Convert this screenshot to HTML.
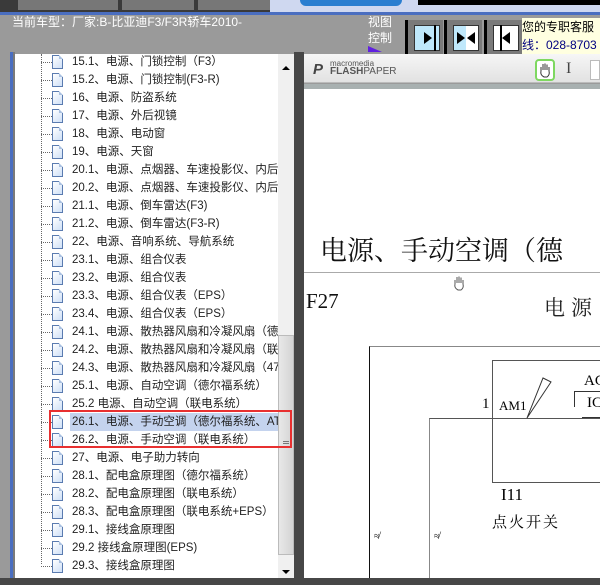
<!DOCTYPE html>
<html><head><meta charset="utf-8"><style>
*{margin:0;padding:0;box-sizing:border-box}
html,body{width:600px;height:585px;overflow:hidden}
body{background:#9a9a9a;position:relative;font-family:"Liberation Sans","Noto Sans CJK SC",sans-serif}
.a{position:absolute}
.row{position:absolute;left:0;height:18px;font-size:11.5px;color:#222;line-height:18px;white-space:nowrap}
.row .ic{position:absolute;left:52px;top:2px;width:11px;height:14px;border:1px solid #5a7bb0;background:linear-gradient(135deg,#fff,#cfe0f7)}
.row .ic:after{content:"";position:absolute;right:-1px;top:-1px;border-style:solid;border-width:0 4px 4px 0;border-color:#fff #fff #a9c0e0 #a9c0e0}
.row .h{position:absolute;left:41px;top:9px;width:11px;border-top:1px dotted #666}
.row .t{position:absolute;left:72px;top:0}
.btn{position:absolute;top:20px;width:38px;height:36px;background:#7a7a7a;border-left:3px solid #000}
.btn i{position:absolute;left:6px;top:5px;width:26px;height:26px;background:#bfe8fb;border:1px solid #333}
</style></head><body>
<div class="a" style="left:0;top:0;width:600px;height:12px;background:#3a3a3a"></div>
<div class="a" style="left:18px;top:0;width:100px;height:10px;background:#777"></div>
<div class="a" style="left:122px;top:0;width:72px;height:10px;background:#777"></div>
<div class="a" style="left:198px;top:0;width:72px;height:10px;background:#777"></div>
<div class="a" style="left:270px;top:0;width:330px;height:12px;background:#cfd8f0"></div>
<div class="a" style="left:300px;top:0;width:102px;height:6px;background:#2a7ed0;border-radius:0 0 6px 6px"></div>
<div class="a" style="left:418px;top:0;width:182px;height:5px;background:#000"></div>
<div class="a" style="left:0;top:12px;width:600px;height:3px;background:#4a6ec0"></div>
<div class="a" style="left:12px;top:14px;color:#fff;font-size:12px;line-height:16px">当前车型：厂家:B-比亚迪F3/F3R轿车2010-</div>
<div class="a" style="left:368px;top:14px;color:#fff;font-size:12px;line-height:16px">视图<br>控制</div>
<div class="a" style="left:368px;top:46px;width:0;height:0;border-left:14px solid #6020e0;border-top:6px solid transparent"></div>
<div class="btn" style="left:405px"><i></i><span class="a" style="left:16px;top:12px;border-left:8px solid #000;border-top:6px solid transparent;border-bottom:6px solid transparent"></span><span class="a" style="left:26px;top:5px;width:2px;height:26px;background:#000"></span></div>
<div class="btn" style="left:444px"><i style="background:linear-gradient(90deg,#bfe8fb 50%,#fff 50%)"></i><span class="a" style="left:10px;top:12px;border-left:8px solid #000;border-top:6px solid transparent;border-bottom:6px solid transparent"></span><span class="a" style="left:20px;top:12px;border-right:8px solid #000;border-top:6px solid transparent;border-bottom:6px solid transparent"></span></div>
<div class="btn" style="left:484px"><i style="background:#fff"></i><span class="a" style="left:13px;top:5px;width:2px;height:26px;background:#000"></span><span class="a" style="left:15px;top:12px;border-right:8px solid #000;border-top:6px solid transparent;border-bottom:6px solid transparent"></span></div>
<div class="a" style="left:522px;top:18px;width:78px;height:36px;background:#ffffe0;font-size:12px;line-height:18px;color:#000;white-space:nowrap;overflow:hidden">您的专职客服<br><span style="color:#000080">线：028-8703</span></div>
<!-- left panel -->
<div class="a" style="left:10px;top:52px;width:3px;height:526px;background:#4a6ec0"></div>
<div class="a" style="left:13px;top:52px;width:2px;height:526px;background:#7a7a7a"></div>
<div class="a" style="left:15px;top:54px;width:263px;height:524px;background:#fff;overflow:hidden">
<div class="a" style="left:26px;top:0;height:510px;border-left:1px dotted #666"></div>
<div class="a" style="left:55px;top:359px;width:210px;height:18px;background:#c4d3ee"></div>
<div style="position:absolute;left:-15px;top:-1px;width:300px">
<div class="row" style="top:0"><span class="h"></span><span class="ic"></span><span class="t">15.1、电源、门锁控制（F3）</span></div>
<div class="row" style="top:18px"><span class="h"></span><span class="ic"></span><span class="t">15.2、电源、门锁控制(F3-R)</span></div>
<div class="row" style="top:36px"><span class="h"></span><span class="ic"></span><span class="t">16、电源、防盗系统</span></div>
<div class="row" style="top:54px"><span class="h"></span><span class="ic"></span><span class="t">17、电源、外后视镜</span></div>
<div class="row" style="top:72px"><span class="h"></span><span class="ic"></span><span class="t">18、电源、电动窗</span></div>
<div class="row" style="top:90px"><span class="h"></span><span class="ic"></span><span class="t">19、电源、天窗</span></div>
<div class="row" style="top:108px"><span class="h"></span><span class="ic"></span><span class="t">20.1、电源、点烟器、车速投影仪、内后视镜</span></div>
<div class="row" style="top:126px"><span class="h"></span><span class="ic"></span><span class="t">20.2、电源、点烟器、车速投影仪、内后视镜</span></div>
<div class="row" style="top:144px"><span class="h"></span><span class="ic"></span><span class="t">21.1、电源、倒车雷达(F3)</span></div>
<div class="row" style="top:162px"><span class="h"></span><span class="ic"></span><span class="t">21.2、电源、倒车雷达(F3-R)</span></div>
<div class="row" style="top:180px"><span class="h"></span><span class="ic"></span><span class="t">22、电源、音响系统、导航系统</span></div>
<div class="row" style="top:198px"><span class="h"></span><span class="ic"></span><span class="t">23.1、电源、组合仪表</span></div>
<div class="row" style="top:216px"><span class="h"></span><span class="ic"></span><span class="t">23.2、电源、组合仪表</span></div>
<div class="row" style="top:234px"><span class="h"></span><span class="ic"></span><span class="t">23.3、电源、组合仪表（EPS）</span></div>
<div class="row" style="top:252px"><span class="h"></span><span class="ic"></span><span class="t">23.4、电源、组合仪表（EPS）</span></div>
<div class="row" style="top:270px"><span class="h"></span><span class="ic"></span><span class="t">24.1、电源、散热器风扇和冷凝风扇（德尔福</span></div>
<div class="row" style="top:288px"><span class="h"></span><span class="ic"></span><span class="t">24.2、电源、散热器风扇和冷凝风扇（联电</span></div>
<div class="row" style="top:306px"><span class="h"></span><span class="ic"></span><span class="t">24.3、电源、散热器风扇和冷凝风扇（47</span></div>
<div class="row" style="top:324px"><span class="h"></span><span class="ic"></span><span class="t">25.1、电源、自动空调（德尔福系统）</span></div>
<div class="row" style="top:342px"><span class="h"></span><span class="ic"></span><span class="t">25.2 电源、自动空调（联电系统）</span></div>
<div class="row" style="top:360px"><span class="h"></span><span class="ic"></span><span class="t">26.1、电源、手动空调（德尔福系统、AT</span></div>
<div class="row" style="top:378px"><span class="h"></span><span class="ic"></span><span class="t">26.2、电源、手动空调（联电系统）</span></div>
<div class="row" style="top:396px"><span class="h"></span><span class="ic"></span><span class="t">27、电源、电子助力转向</span></div>
<div class="row" style="top:414px"><span class="h"></span><span class="ic"></span><span class="t">28.1、配电盒原理图（德尔福系统）</span></div>
<div class="row" style="top:432px"><span class="h"></span><span class="ic"></span><span class="t">28.2、配电盒原理图（联电系统）</span></div>
<div class="row" style="top:450px"><span class="h"></span><span class="ic"></span><span class="t">28.3、配电盒原理图（联电系统+EPS）</span></div>
<div class="row" style="top:468px"><span class="h"></span><span class="ic"></span><span class="t">29.1、接线盒原理图</span></div>
<div class="row" style="top:486px"><span class="h"></span><span class="ic"></span><span class="t">29.2 接线盒原理图(EPS)</span></div>
<div class="row" style="top:504px"><span class="h"></span><span class="ic"></span><span class="t">29.3、接线盒原理图</span></div>
</div></div>
<div class="a" style="left:278px;top:54px;width:16px;height:524px;background:#f0f0f0"></div>
<div class="a" style="left:282px;top:66px;border-bottom:4px solid #000;border-left:4px solid transparent;border-right:4px solid transparent"></div>
<div class="a" style="left:278px;top:335px;width:16px;height:220px;background:linear-gradient(90deg,#e8e8e8,#d4d4d4);border:1px solid #bbb"></div>
<div class="a" style="left:283px;top:441px;width:6px;height:3px;border-top:1px solid #777;border-bottom:1px solid #777"></div>
<div class="a" style="left:282px;top:570px;border-top:4px solid #000;border-left:4px solid transparent;border-right:4px solid transparent"></div>
<div class="a" style="left:49px;top:410px;width:243px;height:38px;border:2px solid #e83030"></div>
<div class="a" style="left:294px;top:52px;width:10px;height:533px;background:#474747"></div>
<div class="a" style="left:0;top:578px;width:600px;height:7px;background:#474747"></div>
<!-- right panel -->
<div class="a" style="left:304px;top:54px;width:296px;height:29px;background:linear-gradient(#f6f6f6,#e2e2e2);border-bottom:1px solid #bbb"></div>
<div class="a" style="left:313px;top:61px;font:bold italic 15px 'Liberation Sans';color:#444">P</div>
<div class="a" style="left:330px;top:60px;font-size:8px;line-height:8px;color:#555">macromedia<br><b style="font-size:10px">FLASH</b><span style="font-size:10px">PAPER</span></div>
<div class="a" style="left:535px;top:59px;width:20px;height:22px;border:2px solid #7ed860;border-radius:4px;background:#fff"></div>
<svg class="a" style="left:538px;top:62px" width="14" height="16"><path d="M3,9 V5 M5,8 V2 M7,8 V1.5 M9,8 V2.5 M11,9 V5 M3,9 Q2,13 6,15 H9 Q12,13 11,9" fill="none" stroke="#333" stroke-width="1"/></svg>
<div class="a" style="left:566px;top:60px;font:16px 'Liberation Serif';color:#444">I</div>
<div class="a" style="left:590px;top:60px;width:10px;height:20px;border:1px solid #bbb;background:#fff"></div>
<div class="a" style="left:304px;top:84px;width:296px;height:5px;background:#a8b0b0"></div>
<div class="a" style="left:304px;top:89px;width:296px;height:489px;background:#fff;overflow:hidden;font-family:'Liberation Serif','Noto Serif CJK SC',serif">
<div class="a" style="left:16px;top:140px;font-size:27px;color:#111;white-space:nowrap">电源、手动空调（德</div>
<div class="a" style="left:0;top:183px;width:296px;height:1px;background:#aaa"></div>
<svg class="a" style="left:148px;top:186px" width="14" height="16"><path d="M3,9 V5 M5,8 V2 M7,8 V1.5 M9,8 V2.5 M11,9 V5 M3,9 Q2,13 6,15 H9 Q12,13 11,9" fill="none" stroke="#555" stroke-width="1"/></svg>
<div class="a" style="left:2px;top:200px;font-size:21px;color:#111">F27</div>
<div class="a" style="left:240px;top:203px;font-size:21px;color:#222;letter-spacing:6px">电源</div>
<div class="a" style="left:65px;top:257px;width:240px;height:240px;border-left:1px solid #111;border-top:1px solid #888"></div>
<div class="a" style="left:188px;top:271px;width:120px;height:123px;border:1px solid #555"></div>
<div class="a" style="left:125px;top:329px;width:180px;height:200px;border-left:1px solid #888;border-top:1px solid #555"></div>
<div class="a" style="left:178px;top:307px;font-size:15px">1</div>
<div class="a" style="left:195px;top:309px;font-size:13px">AM1</div>
<svg class="a" style="left:220px;top:285px" width="40" height="48"><path d="M3,44 L19,4 L27,8 Z" fill="none" stroke="#333" stroke-width="1"/></svg>
<div class="a" style="left:280px;top:284px;font-size:15px">AC</div>
<div class="a" style="left:270px;top:302px;width:30px;height:16px;border-left:1px solid #333;border-top:1px solid #333"></div>
<div class="a" style="left:283px;top:306px;font-size:15px">IC</div>
<div class="a" style="left:278px;top:328px;width:30px;height:1px;background:#333"></div>
<div class="a" style="left:197px;top:396px;font-size:17px">I11</div>
<div class="a" style="left:188px;top:422px;font-size:15px;letter-spacing:2px">点火开关</div>
<div class="a" style="left:70px;top:442px;font-size:10px">≉</div>
<div class="a" style="left:130px;top:442px;font-size:10px">≉</div>
</div>
</body></html>
